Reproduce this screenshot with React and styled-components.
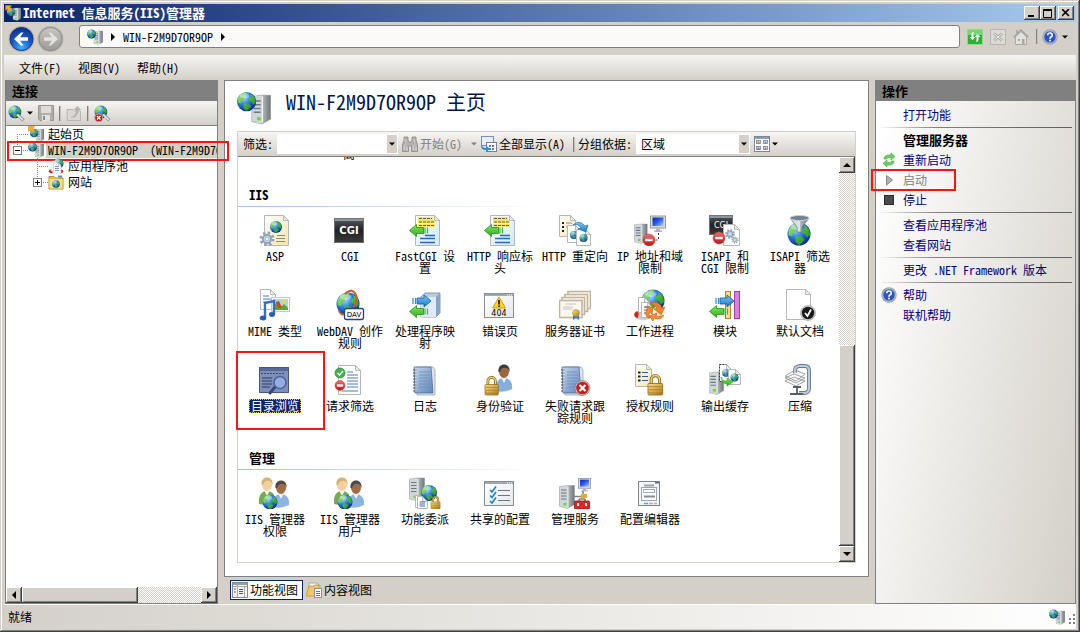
import React from "react";
import styled, { createGlobalStyle, css } from "styled-components";

const face = "#d4d0c8";
const shadow = "#808080";
const dark = "#404040";
const navy = "#000080";

const Global = createGlobalStyle`
  * { box-sizing: border-box; }
  html, body { margin: 0; background: ${face}; }
  body, button, input, select {
    font-family: "Noto Sans CJK SC", "Liberation Sans", sans-serif;
    font-size: 12px;
    line-height: 16px;
    font-feature-settings: "hwid" 1;
    color: #000;
  }
  button { background: none; border: 0; padding: 0; margin: 0; }
  ul { list-style: none; margin: 0; padding: 0; }
  h1, h2, h3 { margin: 0; }
  svg { display: block; flex: none; }
`;

/* ---------- frame ---------- */
const Window = styled.div`
  min-height: 100vh;
  display: flex;
  flex-direction: column;
  padding: 4px 4px 3px;
  background: ${face};
  box-shadow: inset -1px -1px 0 ${dark}, inset 1px 1px 0 ${face},
    inset -2px -2px 0 ${shadow}, inset 2px 2px 0 #fff;
`;

const TitleBar = styled.header`
  display: flex;
  align-items: center;
  height: 18px;
  padding: 0 2px 0 1px;
  gap: 2px;
  background: linear-gradient(90deg, #0a246a, #a6caf0);
`;

const Caption = styled.h1`
  flex: 1;
  color: #fff;
  font-size: 13px;
  line-height: 18px;
  white-space: pre;
`;

const bevel = css`
  background: ${face};
  box-shadow: inset -1px -1px 0 ${dark}, inset 1px 1px 0 #fff,
    inset -2px -2px 0 ${shadow};
`;

const CaptionButton = styled.button`
  ${bevel}
  width: 16px;
  height: 14px;
  display: grid;
  place-items: center;
  margin-left: ${(p) => (p.$apart ? "0" : "-2px")};
`;

const NavBar = styled.nav`
  display: flex;
  align-items: center;
  height: 33px;
  padding: 0 8px 0 4px;
  gap: 7px;
`;

const NavPair = styled.div`
  display: flex;
  align-items: center;
  gap: 2px;
  margin-right: 8px;
`;

const AddressBar = styled.div`
  flex: 1;
  display: flex;
  align-items: center;
  height: 23px;
  padding: 0 7px;
  gap: 6px;
  margin-bottom: 4px;
  background: #fbfaf8;
  border: 1px solid ${shadow};
  border-radius: 3px;
`;

const IconButton = styled.button`
  display: flex;
  align-items: center;
  gap: ${(p) => p.$gap || 0}px;
`;

const NavTools = styled.div`
  display: flex;
  align-items: center;
  gap: 7px;
  margin-bottom: 4px;
`;

const MenuBar = styled.div`
  display: flex;
  align-items: center;
  height: 25px;
  padding: 0 15px;
  gap: 17px;
  background: linear-gradient(#f6f5f3, ${face});
`;

const Body = styled.main`
  flex: 1;
  display: grid;
  grid-template-columns: 213px minmax(0, 1fr) 201px;
  gap: 6px;
  padding-left: 1px;
`;

const StatusBar = styled.footer`
  display: flex;
  align-items: center;
  height: 25px;
  padding: 0 0 0 4px;
  gap: 2px;
  border-top: 1px solid #fff;
  background: linear-gradient(90deg, ${face}, #fff);
`;

const StatusText = styled.span`
  flex: 1;
`;

/* ---------- side panels ---------- */
const Panel = styled.section`
  display: flex;
  flex-direction: column;
  min-width: 0;
  border: 1px solid ${shadow};
  background: ${(p) => p.$bg || "#fff"};
`;

const PanelTitle = styled.h2`
  height: 20px;
  padding: 0 6px;
  background: ${shadow};
  font-size: 13px;
  line-height: 20px;
`;

const PanelTools = styled.div`
  display: flex;
  align-items: center;
  height: 25px;
  padding: 0 2px;
  gap: 5px;
  background: linear-gradient(#f6f5f3, ${face});
  border-bottom: 1px solid ${shadow};
`;

const Divider = styled.span`
  width: 2px;
  height: 15px;
  background: ${shadow};
  border-right: 1px solid #c4c0b8;
`;

const Tree = styled.ul`
  flex: 1;
`;

const TreeRow = styled.li`
  position: relative;
  display: flex;
  align-items: center;
  height: 16px;
  padding-left: 2px;
`;

const TreeLabel = styled.button`
  flex: ${(p) => (p.$selected ? 1 : "none")};
  min-width: 0;
  margin-left: 2px;
  padding-left: 2px;
  overflow: hidden;
  white-space: pre;
  text-align: left;
  background: ${(p) => (p.$selected ? face : "none")};
`;

const Highlight = styled.span`
  position: absolute;
  inset: ${(p) => p.$inset};
  border: 2px solid #fa1414;
  pointer-events: none;
`;

const Bar = styled.div`
  display: flex;
  flex-direction: ${(p) => (p.$vertical ? "column" : "row")};
  ${(p) => (p.$vertical ? "width: 16px;" : "height: 16px;")}
  background: conic-gradient(#fff 25%, ${face} 0 50%, #fff 0 75%, ${face} 0) 0 0 / 2px 2px;
`;

const BarButton = styled.button`
  ${bevel}
  width: 16px;
  height: 16px;
  display: grid;
  place-items: center;
  flex: none;
`;

const Thumb = styled.div`
  ${bevel}
  flex: ${(p) => p.$grow} 0 0;
`;

const Gap = styled.div`
  flex: ${(p) => p.$grow} 0 0;
`;

/* ---------- centre ---------- */
const Centre = styled.div`
  display: flex;
  flex-direction: column;
  min-width: 0;
`;

const HomePanel = styled(Panel)`
  flex: 1;
  padding: 8px 12px 13px;
`;

const HomeHeader = styled.header`
  display: flex;
  align-items: flex-start;
  height: 42px;
  gap: 15px;
  padding-top: 2px;
`;

const HomeTitle = styled.h2`
  font-size: 20px;
  line-height: 22px;
  font-weight: 400;
  color: #00144a;
  white-space: pre;
`;

const FeatureBox = styled.div`
  flex: 1;
  display: flex;
  flex-direction: column;
  border: 1px solid ${face};
`;

const Toolbar = styled.div`
  display: flex;
  align-items: center;
  height: 25px;
  padding-left: 5px;
  background: linear-gradient(#f6f5f3, ${face});
  border-bottom: 1px solid ${shadow};
`;

const ToolLabel = styled.label`
  margin-left: ${(p) => p.$before || 0}px;
`;

const Combo = styled.div`
  position: relative;
  display: flex;
  width: ${(p) => p.$width}px;
  height: 20px;
  margin: 0 4px;
  background: #fff;
  border: 1px solid #fff;

  input, select {
    appearance: none;
    width: 100%;
    border: 0;
    padding: 0 14px 0 4px;
    background: none;
    outline: 0;
  }
`;

const ComboArrow = styled.span`
  position: absolute;
  top: 0;
  right: 0;
  bottom: 0;
  width: 10px;
  display: grid;
  place-items: center;
  background: ${face};
  pointer-events: none;
`;

const ToolButton = styled.button`
  display: flex;
  align-items: center;
  gap: 2px;
  white-space: pre;
  color: ${(p) => (p.disabled ? "#808080" : "#000")};
  margin-right: ${(p) => p.$after || 0}px;
`;

const Scroller = styled.div`
  flex: 1;
  display: flex;
`;

const Features = styled.div`
  flex: 1;
  min-width: 0;
`;

const Clipped = styled.div`
  display: flex;
  align-items: flex-end;
  height: 4px;
  padding-left: 105px;
  overflow: hidden;
  line-height: 14px;
`;

const Group = styled.section`
  padding-top: ${(p) => p.$top}px;
`;

const GroupTitle = styled.h3`
  padding-left: 11px;
  font-size: 13px;
  line-height: 22px;
`;

const GroupRule = styled.div`
  height: 1px;
  margin-bottom: 7px;
  background: linear-gradient(90deg, #a0c0e8, #fff 50%);
`;

const FeatureGrid = styled.div`
  display: grid;
  grid-template-columns: repeat(auto-fill, 75px);
  grid-auto-rows: 75px;
`;

const Feature = styled.button`
  position: relative;
  display: flex;
  flex-direction: column;
  align-items: center;
  padding-right: 1px;
  gap: 4px;
`;

const FeatureLabel = styled.span`
  max-width: 70px;
  line-height: 12px;
  ${(p) =>
    p.$selected &&
    css`
      background: #0a246a;
      color: #fff;
      outline: 1px dotted #d8c070;
      outline-offset: -1px;
      padding: 1px 2px;
      margin-top: -1px;
    `}
`;

const Views = styled.div`
  display: flex;
  align-items: flex-start;
  height: 27px;
  padding: 3px 0 0 6px;
  gap: 2px;
`;

const ViewTab = styled.button`
  display: flex;
  align-items: center;
  gap: 2px;
  height: 20px;
  padding: 0 ${(p) => (p.$active ? 4 : 0)}px 0 1px;
  ${(p) => p.$active && "background:#fff; border:1px solid #0a246a;"}
`;

/* ---------- actions ---------- */
const Actions = styled.ul`
  flex: 1;
  padding: 4px 3px 0 2px;
`;

const Action = styled.li`
  position: relative;
  display: flex;
  align-items: center;
  height: 20px;
  padding-left: 3px;
  gap: 6px;
`;

const ActionIcon = styled.span`
  width: 16px;
  height: 16px;
`;

const ActionLink = styled.a`
  color: ${(p) => (p.$off ? "#808080" : navy)};
  text-decoration: none;
  white-space: pre;
`;

const ActionHead = styled.strong`
  font-size: 13px;
`;

const ActionRule = styled.li`
  height: 5px;
  padding-top: 2px;
  &::before {
    content: "";
    display: block;
    height: 1px;
    background: linear-gradient(90deg, transparent, #808080 30%, #606060);
  }
`;

/* ---------- drawing parts ---------- */
const Defs = () => (
  <svg width="0" height="0" style={{ position: "absolute" }} aria-hidden="true">
    <defs>
      <radialGradient id="sea" cx="35%" cy="30%" r="75%">
        <stop offset="0" stopColor="#b4e0ff" />
        <stop offset=".4" stopColor="#3a8ae8" />
        <stop offset=".75" stopColor="#1648b4" />
        <stop offset="1" stopColor="#0b2a86" />
      </radialGradient>
      <linearGradient id="land" x2="1" y2="1">
        <stop offset="0" stopColor="#a8e890" />
        <stop offset=".5" stopColor="#4cbc38" />
        <stop offset="1" stopColor="#1c7c20" />
      </linearGradient>
      <linearGradient id="steel" x1="0" x2="1">
        <stop offset="0" stopColor="#c9cfd2" />
        <stop offset=".5" stopColor="#e0e3e4" />
        <stop offset=".55" stopColor="#b4babc" />
        <stop offset="1" stopColor="#6e7678" />
      </linearGradient>
      <linearGradient id="screen" x1="0" x2="1" y2="1">
        <stop offset="0" stopColor="#0a1fb0" />
        <stop offset=".5" stopColor="#2a5cf0" />
        <stop offset="1" stopColor="#b8d4ff" />
      </linearGradient>
      <linearGradient id="black" x2="0" y2="1">
        <stop offset="0" stopColor="#5a5a5a" />
        <stop offset=".5" stopColor="#222" />
        <stop offset="1" stopColor="#3a3a3a" />
      </linearGradient>
      <linearGradient id="gold" x2="1" y2="1">
        <stop offset="0" stopColor="#fbe08a" />
        <stop offset="1" stopColor="#b07c14" />
      </linearGradient>
      <linearGradient id="cream" x2="1" y2="1">
        <stop offset="0" stopColor="#fffefa" />
        <stop offset="1" stopColor="#f8e6b0" />
      </linearGradient>
      <linearGradient id="ice" x2="1" y2="1">
        <stop offset="0" stopColor="#fff" />
        <stop offset="1" stopColor="#cfeaf6" />
      </linearGradient>
      <linearGradient id="book" x2="1" y2="1">
        <stop offset="0" stopColor="#c2d6ee" />
        <stop offset="1" stopColor="#5f86bb" />
      </linearGradient>
      <linearGradient id="red" x2="0" y2="1">
        <stop offset="0" stopColor="#f07070" />
        <stop offset="1" stopColor="#c01010" />
      </linearGradient>
      <linearGradient id="greenArrow" x2="0" y2="1">
        <stop offset="0" stopColor="#7ee860" />
        <stop offset="1" stopColor="#2fae1c" />
      </linearGradient>
      <linearGradient id="blueArrow" x2="0" y2="1">
        <stop offset="0" stopColor="#7cc8f8" />
        <stop offset="1" stopColor="#1678c8" />
      </linearGradient>
      <linearGradient id="pane" x2="1" y2="1">
        <stop offset="0" stopColor="#fff" />
        <stop offset="1" stopColor="#e4e8ec" />
      </linearGradient>
      <radialGradient id="navBlue" cx="50%" cy="85%" r="85%">
        <stop offset="0" stopColor="#3fb4f8" />
        <stop offset=".5" stopColor="#1a5ac8" />
        <stop offset="1" stopColor="#0c2c8c" />
      </radialGradient>
      <linearGradient id="navGray" x2="0" y2="1">
        <stop offset="0" stopColor="#c8c6c2" />
        <stop offset="1" stopColor="#9c9a96" />
      </linearGradient>
    </defs>
  </svg>
);

const Svg = ({ size = 32, box = 32, children }) => (
  <svg width={size} height={size} viewBox={`0 0 ${box} ${box}`} aria-hidden="true">
    {children}
  </svg>
);

const Globe = ({ x, y, r }) => (
  <g transform={`translate(${x} ${y}) scale(${r / 10})`}>
    <circle r="10" fill="url(#sea)" />
    <path
      d="M-9-3C-7-8-3-10 1-9.500L0-7-3-5-2-3-5-1-6 2-9 1ZM4-8C8-6 9.500-3 9.500 1L7 3 5 0 3-1 2-4 5-5ZM-3 2L2 2 5 5 2 8 0 9.500-3 7Z"
      fill="url(#land)"
    />
    <ellipse cx="-2" cy="-6" rx="5" ry="2.500" fill="#fff" opacity=".35" />
  </g>
);

const Server = ({ x, y, s = 1 }) => (
  <g transform={`translate(${x} ${y}) scale(${s})`}>
    <path d="M0 1L7 0H15V19L8 23 0 21Z" fill="url(#steel)" stroke="#8c9498" strokeWidth=".5" />
    <path d="M.5 1.500L8 1V22.500L.5 20.500Z" fill="#d0d6da" />
    <path d="M1.500 4.500H7M1.500 7.500H7M1.500 10.500H7M1.500 13.500H7" stroke="#6a7880" strokeWidth="1.200" />
    <path d="M8.500 1V22" stroke="#f4f6f6" strokeWidth=".8" />
    <rect x="4" y="17.500" width="3" height="2.500" fill="#5ee020" />
  </g>
);

const Page = ({ x, y, w, h, fill = "#fff", dash }) => (
  <g>
    <path
      d={`M${x} ${y}H${x + w - 5}L${x + w} ${y + 5}V${y + h}H${x}Z`}
      fill={fill}
      stroke={dash ? "#333" : "#b4b8ba"}
      strokeDasharray={dash}
    />
    <path d={`M${x + w - 5} ${y}V${y + 5}H${x + w}Z`} fill="#e8eaec" stroke="#a9adb0" strokeWidth=".8" />
  </g>
);

const Gear = ({ x, y, r }) => (
  <g transform={`translate(${x} ${y}) scale(${r / 7})`}>
    <circle r="5.600" fill="none" stroke="#8fa3b6" strokeWidth="2.800" strokeDasharray="2.200 2.198" />
    <circle r="3.800" fill="#dce6ee" stroke="#8ea6bf" strokeWidth="2" />
    <circle r="1.800" fill="#fff" stroke="#7890a8" strokeWidth=".6" />
  </g>
);

const Minus = ({ x, y, r = 6 }) => (
  <g>
    <circle cx={x} cy={y} r={r} fill="url(#red)" stroke="#b84848" strokeWidth=".6" />
    <rect x={x - r * 0.62} y={y - 1.2} width={r * 1.24} height="2.400" fill="#fff" />
  </g>
);

const Cross = ({ x, y, r = 7 }) => (
  <g>
    <circle cx={x} cy={y} r={r} fill="#d0d0d0" stroke="#777" strokeWidth=".7" />
    <circle cx={x} cy={y} r={r - 1.2} fill="#cc1818" />
    <path
      d={`M${x - r * 0.4} ${y - r * 0.4}l${r * 0.8} ${r * 0.8}m0 ${-r * 0.8}l${-r * 0.8} ${r * 0.8}`}
      stroke="#fff"
      strokeWidth={r * 0.3}
    />
  </g>
);

const Lock = ({ x, y, s = 1 }) => (
  <g transform={`translate(${x} ${y}) scale(${s})`}>
    <path d="M3 10V6C3 0 11 0 11 6V10" fill="none" stroke="#8a6a1c" strokeWidth="3" />
    <path d="M3 10V6C3 0 11 0 11 6V10" fill="none" stroke="#f0d070" strokeWidth="1.400" />
    <rect x="0" y="9" width="14" height="11" rx="1" fill="url(#gold)" stroke="#8e6616" strokeWidth=".8" />
    <path d="M1 12H13M1 15H13M1 18H13" stroke="#a0761c" strokeWidth=".7" />
  </g>
);

const LeftArrow = ({ x, y }) => (
  <g transform={`translate(${x} ${y})`}>
    <path d="M0 0L7-6V-3H14V3H7V6Z" fill="url(#greenArrow)" stroke="#249018" strokeWidth=".8" />
    <path d="M15.500-3V3M18-3V3" stroke="#3cb82a" strokeWidth="1.200" />
  </g>
);

const RightArrow = ({ x, y }) => (
  <g transform={`translate(${x} ${y})`}>
    <path d="M0 0L-7-6V-3H-14V3H-7V6Z" fill="url(#blueArrow)" stroke="#0f5ca0" strokeWidth=".8" />
    <path d="M-15.500-3V3M-18-3V3" stroke="#2a8cd8" strokeWidth="1.200" />
  </g>
);

const Monitor = ({ x, y, s = 1 }) => (
  <g transform={`translate(${x} ${y}) scale(${s})`}>
    <rect x=".5" y=".5" width="15" height="12" fill="#dcdcd8" stroke="#98989a" />
    <rect x="2.500" y="2" width="11" height="8.500" fill="url(#screen)" />
    <path d="M6 13H10V15H12V16.500H4V15H6Z" fill="#b4b4b2" />
  </g>
);

const Pane = ({ x = 0, y = 4, w = 30, h = 25, fill = "url(#pane)" }) => (
  <g>
    <rect x={x + 0.5} y={y + 0.5} width={w - 1} height={h - 1} fill={fill} stroke="#8a8e92" />
    <rect x={x + 1} y={y + 1} width={w - 2} height="2" fill="#9aa8b8" />
    <path d={`M${x + w - 7} ${y + 2}h1m1 0h1m1 0h1`} stroke="#fff" />
  </g>
);

const Person = ({ x, y, hair, skin, coat }) => (
  <g transform={`translate(${x} ${y})`}>
    <path d="M0 27C-1 18 3 14 8 14S17 18 16 25Q8 29 0 27Z" fill={coat} />
    <path d="M5 13L8 19 11 13Z" fill="#f4f4f4" />
    <ellipse cx="8" cy="7.500" rx="5" ry="6.500" fill={skin} />
    <path d="M2.500 8C1-2 15-2 13.500 8Q12 3 8 4 5 4 4 8Z" fill={hair} />
  </g>
);

const Book = ({ x }) => (
  <g transform={`translate(${x} 2)`}>
    <path d="M3 1H20L22 4V29H4Z" fill="#dfe4ec" stroke="#8c98aa" strokeWidth=".7" />
    <path d="M1 1H18L20 27H2Z" fill="url(#book)" stroke="#4c6e9c" strokeWidth=".8" />
    <path d="M6 6H17M6 9H17M6 12H17M6 15H17M6 18H17M6 21H17" stroke="#6a8cba" strokeWidth=".8" />
    <path d="M0 4H4M0 7H4M0 10H4M0 13H4M0 16H4M0 19H4M0 22H4M0 25H4" stroke="#4a5058" />
    <path d="M3 3V26" stroke="#eaf2fa" strokeWidth=".8" />
  </g>
);

const HeaderPage = () => (
  <>
    <Page x={6.5} y={1.5} w={24} h={30} fill="url(#ice)" />
    <path d="M9 4.500H24M9 7.500H26M9 11.500H26" stroke="#f4e468" strokeWidth="3" />
    <path d="M10 4.500H23M10 8H25M10 11.500H25" stroke="#6a6230" strokeDasharray="3 1" />
    <LeftArrow x={0.5} y={16.5} />
    <path d="M16 21.500H26M11 24.500H26M11 28.500H26" stroke="#2468b8" strokeWidth="1.300" />
  </>
);

const Users = () => (
  <>
    <Person x={14} y={3} hair="#4a4a4a" skin="#a06c44" coat="#8cb4e0" />
    <Person x={0} y={0} hair="#d8b468" skin="#f4cfa4" coat="#78aa50" />
    <Globe x={11} y={25} r={7.5} />
  </>
);

const art = {
  asp: (
    <>
      <Page x={5.5} y={1.5} w={24} h={30} fill="url(#cream)" />
      <Globe x={17} y={13} r={6} />
      <path d="M18 21.500H26M17 24.500H26M17 27.500H26" stroke="#8a8a78" />
      <Gear x={8} y={25} r={7.5} />
    </>
  ),
  cgi: (
    <>
      <rect x=".5" y="4.500" width="29" height="24" fill="url(#black)" stroke="#707478" />
      <rect x="1" y="5" width="28" height="2" fill="#8a98a4" />
      <text x="15" y="20" textAnchor="middle" fontSize="10" fontWeight="700" fontFamily="DejaVu Sans" fill="#fff">CGI</text>
    </>
  ),
  header: <HeaderPage />,
  redirect: (
    <>
      <Page x={0.5} y={1.5} w={16} h={21} fill="url(#cream)" />
      <path d="M3 9H5M3 13H5M3 17H5" stroke="#222" strokeWidth="2" />
      <path d="M7 9H13M7 13H13" stroke="#888" />
      <Page x={8.5} y={11.5} w={13} h={17} />
      <Globe x={15} y={21} r={4} />
      <Page x={17.5} y={15.500} w={14} h={16} />
      <Globe x={24.500} y={24} r={4} />
      <path d="M14 11Q20 5 26 12L29 11 27 18 19 15 22 14Q19 9 14 11Z" fill="url(#blueArrow)" stroke="#186cb0" strokeWidth=".6" />
    </>
  ),
  ip: (
    <>
      <Server x={0.5} y={10} s={0.85} />
      <Monitor x={16} y={1.5} />
      <path d="M24.500 19V26H20" fill="none" stroke="#333" strokeDasharray="2 2" />
      <Minus x={15} y={26} />
    </>
  ),
  isapi: (
    <>
      <rect x=".5" y="1.500" width="23" height="19" fill="url(#black)" stroke="#707478" />
      <rect x="1" y="2" width="22" height="2" fill="#8a98a4" />
      <text x="12" y="14" textAnchor="middle" fontSize="8" fontFamily="DejaVu Sans" fill="#fff">CGI</text>
      <Page x={14.5} y={10.5} w={16} h={21} />
      <Gear x={21} y={20} r={5} />
      <Gear x={26} y={26} r={3.5} />
      <Minus x={10} y={24} />
    </>
  ),
  filter: (
    <>
      <Globe x={15} y={20} r={11.5} />
      <path d="M6 4L13 13V18H18V13L25 4Z" fill="url(#steel)" stroke="#60707c" strokeWidth=".7" />
      <ellipse cx="15.500" cy="4" rx="9.500" ry="2.500" fill="#6f8290" stroke="#c4d0d8" />
    </>
  ),
  mime: (
    <>
      <Page x={1.5} y={0.5} w={15} h={20} />
      <path d="M4 7H10M4 10H13M4 13H13" stroke="#4a78b0" />
      <rect x="12.500" y="8.500" width="18" height="14" fill="#fff" stroke="#c8c8c0" />
      <rect x="14" y="10" width="15" height="11" fill="#a8d8f4" />
      <path d="M14 21V18L18 13 22 18 25 15 29 19V21Z" fill="#58a838" />
      <path d="M17 13L20 12 23 19H19Z" fill="#c84818" />
      <circle cx="25" cy="13" r="2" fill="#f8d838" />
      <path d="M6 29V14L15 12V25" fill="none" stroke="#3a6ec8" strokeWidth="2.400" />
      <ellipse cx="4" cy="29" rx="3.200" ry="2.500" fill="#2c5cb8" />
      <ellipse cx="13" cy="25.500" rx="3" ry="2.400" fill="#2c5cb8" />
    </>
  ),
  webdav: (
    <>
      <Globe x={14} y={15} r={11.5} />
      <path d="M11 5Q18-2 22 6Q25 13 19 18M5 22Q8 28 12 24" fill="none" stroke="#d05a30" strokeWidth="2" />
      <rect x="10.500" y="19.500" width="19" height="11" rx="2" fill="#fff" stroke="#1a4a78" strokeWidth="1.300" />
      <text x="20" y="28" textAnchor="middle" fontSize="7" fontFamily="DejaVu Sans" fill="#000">DAV</text>
    </>
  ),
  handler: (
    <>
      <path d="M12 8L16 4H31V24L27 28H12Z" fill="#b8cce4" stroke="#7088a4" strokeWidth=".8" />
      <path d="M12 8H27V28H12Z" fill="#dfeaf5" />
      <path d="M27 8L31 4V24L27 28Z" fill="#88a4c8" />
      <RightArrow x={22} y={12} />
      <LeftArrow x={0.500} y={22.500} />
    </>
  ),
  error: (
    <>
      <Pane />
      <path d="M15 8L21.500 19H8.500Z" fill="#fcd428" stroke="#d8a010" strokeLinejoin="round" />
      <path d="M15 11V15.500M15 16.500V18" stroke="#000" strokeWidth="1.500" />
      <text x="15" y="27" textAnchor="middle" fontSize="8" fontFamily="DejaVu Sans" fill="#000">404</text>
    </>
  ),
  cert: (
    <>
      {[[9, 2.5], [6, 5.5], [3, 8.500], [0.5, 11.500]].map(([x, y]) => (
        <g key={x}>
          <rect x={x} y={y} width="22.500" height="17" fill="#fbf8f2" stroke="#c4b49c" strokeWidth="1.600" />
        </g>
      ))}
      <path d="M6 15H17M4 18H14M4 20H13" stroke="#b8b8b8" strokeWidth=".8" />
      <path d="M14 25V31L17 29 20 31V25Z" fill="#3878d8" />
      <circle cx="17" cy="24" r="3.500" fill="url(#gold)" stroke="#c08810" strokeWidth=".6" />
    </>
  ),
  worker: (
    <>
      <Globe x={19} y={12} r={11.5} />
      <ellipse cx="9" cy="27" rx="9" ry="4" fill="#c8d0d4" />
      <path d="M0 25Q2 21 5 23L4 29Q1 29 0 25Z" fill="#d02818" />
      <Page x={4.500} y={8.500} w={11} h={15} />
      <Page x={7.500} y={13.500} w={11} h={15} />
      <path d="M10 18H16M10 21H16M10 24H14" stroke="#555" />
      <circle cx="23" cy="23" r="5" fill="#f4f4f4" />
      <path d="M16 14Q25 11 28 19L31 18 27 26 20 20 23 19Q21 16 16 14Z" fill="#f08020" stroke="#c45a10" strokeWidth=".6" />
      <path d="M30 26Q27 32 20 29L19 32 15 27 23 24 22 27Q26 28 30 26Z" fill="#f49030" stroke="#c45a10" strokeWidth=".6" />
      <path d="M14 29Q9 24 14 20L11 18 19 18 18 25 16 23Q14 25 16 29Z" fill="#f8882c" stroke="#c45a10" strokeWidth=".6" />
    </>
  ),
  modules: (
    <>
      <rect x="16.500" y="2.500" width="5" height="27" fill="#f4e080" stroke="#a08c20" />
      <rect x="25.500" y="2.500" width="5" height="27" fill="#d880dc" stroke="#a040a8" />
      <RightArrow x={25} y={12} />
      <LeftArrow x={0.500} y={22.500} />
    </>
  ),
  doc: (
    <>
      <Page x={2.5} y={0.5} w={24} h={30} />
      <circle cx="24" cy="24" r="7.500" fill="#ccc" stroke="#999" strokeWidth=".6" />
      <circle cx="24" cy="24" r="6.200" fill="#1a1a1a" />
      <path d="M21 24L23.500 27 27 20.500" fill="none" stroke="#fff" strokeWidth="1.700" />
    </>
  ),
  browse: (
    <>
      <rect x=".5" y="3.500" width="29" height="25" fill="#7e8fb8" stroke="#485880" />
      <rect x="1" y="4" width="28" height="3" fill="#54689c" />
      <path d="M2 9.500H26" stroke="#384a78" strokeDasharray="2 1" />
      <path d="M3 14H13M3 17H13M3 20H13M3 23H11" stroke="#2c3c68" strokeWidth="1.200" />
      <path d="M16 23L11 29" stroke="#34487c" strokeWidth="3" strokeLinecap="round" />
      <circle cx="21" cy="18.500" r="6" fill="#93aee0" stroke="#4a62a0" strokeWidth="1.500" />
    </>
  ),
  request: (
    <>
      <Page x={4.5} y={1.5} w={22} h={29} />
      <path d="M13 8H19M13 11H24M13 14H24M13 17H24M13 20H24M13 23H24M8 27H24" stroke="#4a7cb8" />
      <circle cx="6" cy="9" r="5" fill="#42b04c" stroke="#2c8038" strokeWidth=".7" />
      <path d="M3.500 9L5.500 11 9 7" fill="none" stroke="#fff" strokeWidth="1.500" />
      <Minus x={6} y={21.500} r={5} />
    </>
  ),
  log: <Book x={4} />,
  auth: (
    <>
      <Person x={12} y={0} hair="#3c3c40" skin="#9c6640" coat="#86aedc" />
      <Lock x={1} y={12} s={0.95} />
    </>
  ),
  failed: (
    <>
      <Book x={2} />
      <Cross x={23.500} y={24} r={7.5} />
    </>
  ),
  authz: (
    <>
      <Page x={1.5} y={0.5} w={16} h={22} fill="url(#cream)" />
      <path d="M4 8.500H6.500M4 12.500H6.500M4 16.500H6.500" stroke="#222" strokeWidth="2" />
      <path d="M8 8.500H14M8 12.500H14M8 16.500H14" stroke="#3058a0" />
      <Lock x={14} y={10} s={1.05} />
    </>
  ),
  cache: (
    <>
      <Server x={0} y={8} s={0.98} />
      <Page x={10.5} y={0.5} w={12} h={17} dash="2 1" />
      <Globe x={17} y={9} r={3.8} />
      <Page x={19.5} y={5.5} w={12} h={15} />
      <Globe x={25.500} y={13.500} r={4} />
      <path d="M12 13Q14 18 18 17V14L24 18 18 22V20Q13 20 12 13Z" fill="url(#greenArrow)" stroke="#249018" strokeWidth=".5" />
    </>
  ),
  compress: (
    <>
      <path d="M1 17L12 22 21 17 10 13ZM1 14L12 19 21 14 10 10ZM1 12L11 6 21 10 12 17Z" fill="#fafafa" stroke="#8a8a8a" strokeWidth=".8" />
      <path d="M11 9Q10 2 16 2H21Q25 2 25 7V24Q25 29 20 29H15" fill="none" stroke="#6a7c90" strokeWidth="4" />
      <path d="M11 9Q10 2 16 2H21Q25 2 25 7V24Q25 29 20 29H15" fill="none" stroke="#b8cadc" strokeWidth="2.200" />
      <path d="M13 22V29M6 30H19M9 23H17" stroke="#555d66" strokeWidth="1.800" />
    </>
  ),
  users: <Users />,
  delegate: (
    <>
      <Server x={0.5} y={1} />
      <Globe x={20} y={16} r={8} />
      <Page x={6.500} y={18.500} w={9} h={12} />
      <Page x={8.500} y={19.500} w={10} h={12} />
      <path d="M10.500 25H16M10.500 27H16M10.500 29H16" stroke="#3c68a8" />
      <Lock x={22} y={19} s={0.65} />
    </>
  ),
  shared: (
    <>
      <Pane />
      <path d="M14 13.500H26M14 18.500H26M14 23.500H26" stroke="#70747a" />
      <path d="M6 13L8 15 12 9.500M6 18.500L8 20.500 12 15M6 24L8 26 12 20.500" fill="none" stroke="#1484c0" strokeWidth="1.500" />
    </>
  ),
  service: (
    <>
      <Server x={0.5} y={8.500} />
      <Monitor x={19} y={1} s={0.82} />
      <path d="M15 19.500H24V14" fill="none" stroke="#808488" strokeWidth="1.500" />
      <rect x="22" y="17" width="6" height="4" fill="#e8a828" />
      <path d="M20 24V22H26V24" fill="none" stroke="#444" />
      <rect x="15.500" y="24" width="15" height="8" rx="1" fill="#d42c28" stroke="#901410" strokeWidth=".8" />
      <rect x="18" y="26" width="2" height="3" fill="#eee" />
      <rect x="26" y="26" width="2" height="3" fill="#eee" />
    </>
  ),
  config: (
    <>
      <rect x="4.500" y="4.500" width="21" height="24" fill="#f4f5f6" stroke="#80848a" />
      <rect x="21" y="5" width="4" height="1.500" fill="#4870b0" />
      <rect x="7.500" y="10.500" width="15" height="13" fill="#fff" stroke="#a0a4aa" />
      <path d="M10 8.500H20" stroke="#a0a4aa" strokeWidth="2" />
      <rect x="9.500" y="12.500" width="11" height="3" fill="#fff" stroke="#a8acb4" />
      <path d="M10 19.500H21" stroke="#888c94" strokeWidth="2" />
      <path d="M10 26.500H14" stroke="#30b8e0" strokeWidth="1.500" />
      <path d="M15 26.500H19M20 26.500H23" stroke="#b0b4b8" strokeWidth="1.500" />
    </>
  ),
};

const ServerGlobe = ({ size = 16 }) => (
  <Svg size={size}>
    <Server x={14} y={4} s={1.18} />
    <Globe x={9} y={10} r={9} />
  </Svg>
);

const StartIcon = () => (
  <Svg size={16}>
    <Server x={16} y={6} s={1.08} />
    <Globe x={12} y={14} r={8.5} />
    <path d="M1 1H13L10 5 14 10 9 13 5 8 1 11Z" fill="#f8b020" stroke="#d07808" />
  </Svg>
);

const Search = ({ failed }) => (
  <Svg size={17}>
    <Globe x={13} y={13} r={12} />
    <path d="M18 18L29 29" stroke="#8a949c" strokeWidth="6" />
    <path d="M17 18L28 28" stroke="#e0e6ea" strokeWidth="3" />
    {failed && <Cross x={9} y={24} r={8} />}
  </Svg>
);

const Tri = ({ dir = "down", color = "#000", size = 8 }) => {
  const turn = { down: 0, left: 90, up: 180, right: 270 }[dir];
  return (
    <svg width={size} height={size} viewBox="0 0 8 8" aria-hidden="true">
      <path d="M0 2H8L4 6Z" fill={color} transform={`rotate(${turn} 4 4)`} />
    </svg>
  );
};

const NavArrow = ({ forward }) => (
  <svg width="27" height="28" viewBox="0 0 27 28" aria-hidden="true">
    <circle cx="13.500" cy="14" r="13" fill="#b4b2ae" />
    <circle cx="13.500" cy="14" r="11.500" fill={forward ? "url(#navGray)" : "url(#navBlue)"} stroke={forward ? "#8e8c88" : "#18388c"} />
    <g transform={forward ? "rotate(180 13.5 14)" : undefined}>
      <path d="M6 14L13 7.500H15.500L12 12.300H20V15.700H12L15.500 20.500H13Z" fill={forward ? "#e4e2de" : "#fff"} />
    </g>
  </svg>
);

const Help = () => (
  <Svg size={16} box={16}>
    <circle cx="8" cy="8" r="7.700" fill="#9a9ea8" />
    <circle cx="8" cy="8" r="6.200" fill="#2a54c0" stroke="#e4e8f0" strokeWidth=".7" />
    <path d="M5.700 6.300Q5.800 4 8 4T10.300 6.200Q10.300 7.300 8.900 8Q8 8.500 8 9.700" fill="none" stroke="#fff" strokeWidth="1.700" />
    <rect x="7.100" y="10.700" width="1.800" height="1.700" fill="#fff" />
  </Svg>
);

const Refresh = () => (
  <Svg size={16} box={16}>
    <rect x=".5" y=".5" width="15" height="15" fill="#30b030" stroke="#90d890" />
    <rect x="1" y="1" width="14" height="5" fill="#78d470" />
    <path d="M7 3Q4 3 4.500 8H2.500L5.500 11 8.500 8H6.500Q6 5 7 3ZM9 13Q12 13 11.500 8H13.500L10.500 5 7.500 8H9.500Q10 11 9 13Z" fill="#fff" />
  </Svg>
);

const Stop = () => (
  <Svg size={16} box={16}>
    <rect x=".5" y=".5" width="15" height="15" fill="#dcdad6" stroke="#b8b6b2" />
    <path d="M4 4.500L12 11.500M12 4.500L4 11.500" stroke="#a4a4a4" strokeWidth="2.400" />
    <path d="M4 4.500L12 11.500M12 4.500L4 11.500" stroke="#f4f4f4" />
  </Svg>
);

const Home = () => (
  <Svg size={16} box={16}>
    <path d="M2.500 8V15.500H13.500V8L8 2.500Z" fill="#e4e2de" stroke="#aaa8a4" />
    <path d="M.5 8.500L8 1 15.500 8.500M4 1V5" fill="none" stroke="#a4a29e" strokeWidth="1.500" />
    <path d="M5 10H7V12H5ZM9 10H11.500V15H9Z" fill="#a8a6a2" />
  </Svg>
);

const Disk = () => (
  <Svg size={16} box={16}>
    <path d="M.5 .5H15.500V15.500H2L.5 14Z" fill="#b0aeaa" stroke="#989692" />
    <rect x="3" y="1" width="10" height="7" fill="#dedcd8" />
    <rect x="4" y="10" width="8" height="6" fill="#e4e2de" />
    <rect x="5" y="11" width="2" height="4" fill="#8e8c88" />
  </Svg>
);

const FolderUp = () => (
  <Svg size={16} box={16}>
    <path d="M1 4.500H7L8.500 6H14.500V15.500H1.500Z" fill="#dad8d4" stroke="#b8b6b2" />
    <path d="M5 12Q10 11 10 5H7.500L11.500 1 15 5H12.500Q12 12 5 13Z" fill="#b4b2ae" />
  </Svg>
);

const PoolIcon = () => (
  <Svg size={16}>
    <Globe x={21} y={11} r={10} />
    <path d="M1 27Q2 21 9 22V31Q3 31 1 27ZM24 22Q31 23 31 28 26 32 22 29Z" fill="#c83028" />
    <Page x={6} y={6} w={15} h={20} />
    <Page x={11} y={10} w={15} h={20} />
    <path d="M14 17H22M14 21H22M14 25H22" stroke="#5070a0" strokeWidth="1.500" />
  </Svg>
);

const SitesIcon = () => (
  <Svg size={16}>
    <path d="M2 5H12L15 8H30V30H2Z" fill="#e8c050" stroke="#b88c28" strokeWidth="2" />
    <path d="M3 10H29V29H3Z" fill="#f8de90" />
    <path d="M20 3H28V7H20Z" fill="#5090d0" />
    <Globe x={16} y={20} r={7.5} />
  </Svg>
);

const Binoculars = () => (
  <Svg size={16} box={16}>
    <path d="M2 1H6V4L7 6H9L10 4V1H14V4L15.500 9V15.500H9.500V10H6.500V15.500H.5V9L2 4Z" fill="#b4b2ae" stroke="#8a8884" strokeWidth=".8" />
    <path d="M3 3V8L2 14M12 3V8L11 14M5 11V15M14 11V15" stroke="#dedcd8" />
  </Svg>
);

const ShowAll = () => (
  <Svg size={16} box={16}>
    <rect x=".5" y=".5" width="12" height="9" fill="#e8eef6" stroke="#8090a8" />
    <rect x="5.500" y="6.500" width="10" height="9" fill="#fff" stroke="#7080a0" />
    <path d="M8 10H14M8 13H14" stroke="#5878b0" strokeWidth="2" strokeDasharray="2 1" />
    <path d="M1 7Q0 12 5 12V9.500L9 13 5 16V14Q-2 14 1 7Z" fill="#2090e0" />
  </Svg>
);

const Tiles = () => (
  <Svg size={16} box={16}>
    <rect x=".5" y=".5" width="15" height="15" fill="#fff" stroke="#7c8494" />
    <rect x="1" y="1" width="14" height="2" fill="#8c9cb8" />
    {[[2.500, 4.500, "#b08050"], [9.500, 4.500, "#5090d0"], [2.500, 10.500, "#5068c8"], [9.500, 10.500, "#c06858"]].map(([x, y, c]) => (
      <g key={c}>
        <rect x={x} y={y} width="4" height="3" fill="#e8eef4" stroke="#788090" strokeWidth=".8" />
        <rect x={x + 1} y={y + 1} width="2" height="2" fill={c} />
      </g>
    ))}
  </Svg>
);

const FeaturesViewIcon = () => (
  <Svg size={16} box={16}>
    <rect x=".5" y=".5" width="15" height="15" fill="#f4f4f2" stroke="#85878a" />
    <path d="M1 2H15" stroke="#9aa0a8" strokeWidth="2" />
    <path d="M5.500 3V15M12.500 5V15M1 4.500H15" stroke="#a4a8ac" />
    <path d="M7 7.500H11M7 9.500H11M7 11.500H11M2 7H4M2 10H4" stroke="#55585c" />
  </Svg>
);

const ContentViewIcon = () => (
  <Svg size={16} box={16}>
    <path d="M3 1H10L14 3V9H3Z" fill="#f4f6f8" stroke="#98a0a8" strokeWidth=".8" />
    <path d="M0 14L3 4H8L9 3H13V14Z" fill="#efc860" stroke="#c09434" strokeWidth=".8" />
    <rect x="8.500" y="6.500" width="7" height="9" fill="#fff" stroke="#8894a4" />
    <path d="M10 9.500H14M10 11.500H14M10 13.500H14" stroke="#4878b8" />
  </Svg>
);

const ActionArt = {
  restart: (
    <Svg size={16} box={16}>
      <path d="M3 7Q3 3 8 3H10V1L14 4.500 10 8V5.500H8Q6 5.500 5.500 7ZM13 9Q13 13 8 13H6V15L2 11.500 6 8V10.500H8Q10 10.500 10.500 9Z" fill="#6cd060" stroke="#3ca838" strokeWidth=".6" />
    </Svg>
  ),
  start: (
    <Svg size={16} box={16}>
      <path d="M5.500 3.500L11.500 8 5.500 13Z" fill="#b0b0b0" stroke="#888" />
    </Svg>
  ),
  stop: (
    <Svg size={16} box={16}>
      <rect x="3.500" y="3.500" width="9" height="9" fill="#4c4c4c" stroke="#2c2c2c" />
    </Svg>
  ),
  help: <Help />,
};

/* Connector lines drawn in front of each tree node. */
const Branch = ({ up, down, tick = true, sign, blank }) => (
  <svg width="20" height="16" viewBox="0 0 20 16" aria-hidden="true">
    {!blank && (
      <g stroke="#808080" strokeDasharray="1 1">
        {up && <path d="M9.500 0V8" />}
        {down && <path d="M9.500 8V16" />}
        {tick && <path d="M9 8.500H20" />}
      </g>
    )}
    {sign && (
      <g>
        <rect x="5.500" y="4.500" width="8" height="8" fill="#fff" stroke="#808080" />
        <path d="M7 8.500H12" stroke="#000" />
        {sign === "+" && <path d="M9.500 6V11" stroke="#000" />}
      </g>
    )}
  </svg>
);

/* ---------- data ---------- */
const iisFeatures = [
  ["asp", "ASP"],
  ["cgi", "CGI"],
  ["header", "FastCGI 设置"],
  ["header", "HTTP 响应标头"],
  ["redirect", "HTTP 重定向"],
  ["ip", "IP 地址和域限制"],
  ["isapi", "ISAPI 和 CGI 限制"],
  ["filter", "ISAPI 筛选器"],
  ["mime", "MIME 类型"],
  ["webdav", "WebDAV 创作规则"],
  ["handler", "处理程序映射"],
  ["error", "错误页"],
  ["cert", "服务器证书"],
  ["worker", "工作进程"],
  ["modules", "模块"],
  ["doc", "默认文档"],
  ["browse", "目录浏览", true],
  ["request", "请求筛选"],
  ["log", "日志"],
  ["auth", "身份验证"],
  ["failed", "失败请求跟踪规则"],
  ["authz", "授权规则"],
  ["cache", "输出缓存"],
  ["compress", "压缩"],
];

const adminFeatures = [
  ["users", "IIS 管理器权限"],
  ["users", "IIS 管理器用户"],
  ["delegate", "功能委派"],
  ["shared", "共享的配置"],
  ["service", "管理服务"],
  ["config", "配置编辑器"],
];

const actions = [
  { text: "打开功能" },
  { rule: true },
  { text: "管理服务器", head: true },
  { text: "重新启动", icon: "restart" },
  { text: "启动", icon: "start", off: true, marked: true },
  { text: "停止", icon: "stop" },
  { rule: true },
  { text: "查看应用程序池" },
  { text: "查看网站" },
  { rule: true },
  { text: "更改 .NET Framework 版本" },
  { rule: true },
  { text: "帮助", icon: "help" },
  { text: "联机帮助" },
];

const FeatureGroup = ({ title, top, items }) => (
  <Group $top={top}>
    <GroupTitle>{title}</GroupTitle>
    <GroupRule />
    <FeatureGrid>
      {items.map(([icon, label, selected]) => (
        <Feature key={label}>
          <Svg>{art[icon]}</Svg>
          <FeatureLabel $selected={selected}>{label}</FeatureLabel>
          {selected && <Highlight $inset="-13px -12px 9px -2px" />}
        </Feature>
      ))}
    </FeatureGrid>
  </Group>
);

export default function App() {
  return (
    <Window>
      <Global />
      <Defs />
      <TitleBar>
        <StartIcon />
        <Caption>Internet 信息服务(IIS)管理器</Caption>
        <CaptionButton aria-label="最小化">
          <svg width="8" height="8"><path d="M0 7H6" stroke="#000" strokeWidth="2" /></svg>
        </CaptionButton>
        <CaptionButton aria-label="最大化">
          <svg width="10" height="9"><path d="M.5 0V8.500H8.500V.5M0 1H9" fill="none" stroke="#000" /><path d="M0 1H9" stroke="#000" strokeWidth="2" /></svg>
        </CaptionButton>
        <CaptionButton $apart aria-label="关闭">
          <svg width="8" height="8"><path d="M0 0L7 7M7 0L0 7" stroke="#000" strokeWidth="1.600" /></svg>
        </CaptionButton>
      </TitleBar>

      <NavBar>
        <NavPair>
          <IconButton aria-label="后退"><NavArrow /></IconButton>
          <IconButton aria-label="前进" disabled><NavArrow forward /></IconButton>
        </NavPair>
        <AddressBar>
          <ServerGlobe />
          <Tri dir="right" />
          <span>WIN-F2M9D7OR9OP</span>
          <Tri dir="right" />
        </AddressBar>
        <NavTools>
          <IconButton aria-label="刷新"><Refresh /></IconButton>
          <IconButton aria-label="停止" disabled><Stop /></IconButton>
          <IconButton aria-label="主页" disabled><Home /></IconButton>
          <IconButton $gap={4} aria-label="帮助">
            <Divider />
            <Help />
            <Tri size={6} />
          </IconButton>
        </NavTools>
      </NavBar>

      <MenuBar>
        <ToolButton>文件(F)</ToolButton>
        <ToolButton>视图(V)</ToolButton>
        <ToolButton>帮助(H)</ToolButton>
      </MenuBar>

      <Body>
        <Panel>
          <PanelTitle>连接</PanelTitle>
          <PanelTools>
            <IconButton $gap={2} aria-label="连接"><Search /><Tri size={6} /></IconButton>
            <IconButton aria-label="保存" disabled><Disk /></IconButton>
            <Divider />
            <IconButton aria-label="向上" disabled><FolderUp /></IconButton>
            <Divider />
            <IconButton aria-label="断开连接"><Search failed /></IconButton>
          </PanelTools>
          <Tree>
            <TreeRow>
              <Branch down />
              <StartIcon />
              <TreeLabel>起始页</TreeLabel>
            </TreeRow>
            <TreeRow>
              <Branch up sign="-" />
              <ServerGlobe />
              <TreeLabel $selected>WIN-F2M9D7OR9OP  (WIN-F2M9D7OR9OP\Administrator)</TreeLabel>
              <Highlight $inset="-1px -12px -3px 1px" />
            </TreeRow>
            <TreeRow>
              <Branch blank />
              <Branch up down />
              <PoolIcon />
              <TreeLabel>应用程序池</TreeLabel>
            </TreeRow>
            <TreeRow>
              <Branch blank />
              <Branch up sign="+" />
              <SitesIcon />
              <TreeLabel>网站</TreeLabel>
            </TreeRow>
          </Tree>
          <Bar>
            <BarButton aria-label="向左滚动"><Tri dir="left" /></BarButton>
            <Thumb $grow={116} />
            <Gap $grow={63} />
            <BarButton aria-label="向右滚动"><Tri dir="right" /></BarButton>
          </Bar>
        </Panel>

        <Centre>
          <HomePanel>
            <HomeHeader>
              <ServerGlobe size={34} />
              <HomeTitle>WIN-F2M9D7OR9OP 主页</HomeTitle>
            </HomeHeader>
            <FeatureBox>
              <Toolbar>
                <ToolLabel htmlFor="filter">筛选:</ToolLabel>
                <Combo $width={121}>
                  <input id="filter" type="text" />
                  <ComboArrow><Tri size={6} /></ComboArrow>
                </Combo>
                <ToolButton disabled $after={9}><Binoculars />开始(G)</ToolButton>
                <ToolButton disabled $after={4} aria-label="开始选项"><Tri size={6} color="#808080" /></ToolButton>
                <ToolButton $after={8}><ShowAll />全部显示(A)</ToolButton>
                <Divider />
                <ToolLabel htmlFor="grouping" $before={3}>分组依据:</ToolLabel>
                <Combo $width={114}>
                  <select id="grouping"><option>区域</option></select>
                  <ComboArrow><Tri size={6} /></ComboArrow>
                </Combo>
                <ToolButton aria-label="视图"><Tiles /><Tri size={6} /></ToolButton>
              </Toolbar>
              <Scroller>
                <Features>
                  <Clipped>离</Clipped>
                  <FeatureGroup title="IIS" top={23} items={iisFeatures} />
                  <FeatureGroup title="管理" top={8} items={adminFeatures} />
                </Features>
                <Bar $vertical>
                  <BarButton aria-label="向上滚动"><Tri dir="up" /></BarButton>
                  <Gap $grow={172} />
                  <Thumb $grow={202} />
                  <BarButton aria-label="向下滚动"><Tri /></BarButton>
                </Bar>
              </Scroller>
            </FeatureBox>
          </HomePanel>
          <Views>
            <ViewTab $active><FeaturesViewIcon />功能视图</ViewTab>
            <ViewTab><ContentViewIcon />内容视图</ViewTab>
          </Views>
        </Centre>

        <Panel $bg={`linear-gradient(100deg, #fff 5%, ${face})`}>
          <PanelTitle>操作</PanelTitle>
          <Actions>
            {actions.map((a, i) =>
              a.rule ? (
                <ActionRule key={i} />
              ) : (
                <Action key={i}>
                  <ActionIcon>{a.icon && ActionArt[a.icon]}</ActionIcon>
                  {a.head ? (
                    <ActionHead>{a.text}</ActionHead>
                  ) : (
                    <ActionLink href="#" $off={a.off}>{a.text}</ActionLink>
                  )}
                  {a.marked && <Highlight $inset="-1px 116px -1px -7px" />}
                </Action>
              )
            )}
          </Actions>
        </Panel>
      </Body>

      <StatusBar>
        <StatusText>就绪</StatusText>
        <ServerGlobe />
        <svg width="9" height="16" aria-hidden="true">
          <path d="M6 5h2v2h-2zM6 9h2v2h-2zM6 13h2v2h-2zM2 9h2v2h-2zM2 13h2v2h-2z" fill="#808080" />
        </svg>
      </StatusBar>
    </Window>
  );
}
